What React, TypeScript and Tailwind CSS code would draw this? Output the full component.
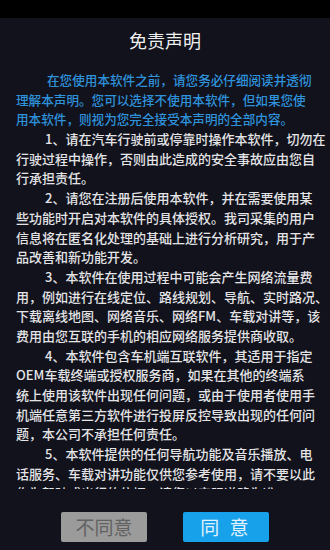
const intro = [
  "在您使用本软件之前，请您务必仔细阅读并透彻",
  "理解本声明。您可以选择不使用本软件，但如果您使",
  "用本软件，则视为您完全接受本声明的全部内容。",
];

const clauses = [
  [
    "1、请在汽车行驶前或停靠时操作本软件，切勿在",
    "行驶过程中操作，否则由此造成的安全事故应由您自",
    "行承担责任。",
  ],
  [
    "2、请您在注册后使用本软件，并在需要使用某",
    "些功能时开启对本软件的具体授权。我司采集的用户",
    "信息将在匿名化处理的基础上进行分析研究，用于产",
    "品改善和新功能开发。",
  ],
  [
    "3、本软件在使用过程中可能会产生网络流量费",
    "用，例如进行在线定位、路线规划、导航、实时路况、",
    "下载离线地图、网络音乐、网络FM、车载对讲等，该",
    "费用由您互联的手机的相应网络服务提供商收取。",
  ],
  [
    "4、本软件包含车机端互联软件，其适用于指定",
    "OEM车载终端或授权服务商，如果在其他的终端系",
    "统上使用该软件出现任何问题，或由于使用者使用手",
    "机端任意第三方软件进行投屏反控导致出现的任何问",
    "题，本公司不承担任何责任。",
  ],
  [
    "5、本软件提供的任何导航功能及音乐播放、电",
    "话服务、车载对讲功能仅供您参考使用，请不要以此",
    "作为驾驶或出行的依据，请您以实际道路为准。",
  ],
];

function Paragraph({ lines, blue }: { lines: string[]; blue?: boolean }) {
  return (
    <p className={blue ? "text-[#2f93dc] text-[12.6px]" : "text-[#e4e4e6] text-[13px]"}>
      {lines.map((line, i) => (
        <span
          key={i}
          className={`block h-[19.7px] whitespace-nowrap leading-[19.7px] ${i === 0 ? (blue ? "pl-[31px]" : "pl-[29px]") : ""}`}
        >
          {line}
        </span>
      ))}
    </p>
  );
}

export default function App() {
  return (
    <div
      className="w-[330px] h-[550px] flex flex-col bg-black overflow-hidden"
      style={{ fontFamily: '"Noto Sans CJK SC", "Noto Sans", sans-serif' }}
    >
      {/* status bar area */}
      <div className="h-[18px] shrink-0 bg-black" />

      <div className="flex-1 flex flex-col bg-[#11121c]">
        <h1 className="pt-[10px] text-center text-[18px] leading-[24px] text-[#f0f0f0]">
          免责声明
        </h1>

        {/* scrolling body */}
        <div className="mt-[18px] h-[419px] shrink-0 overflow-hidden pl-4 pr-[2px] font-medium">
          <Paragraph lines={intro} blue />
          {clauses.map((c, i) => (
            <Paragraph key={i} lines={c} />
          ))}
        </div>

        {/* actions */}
        <div className="mt-[23px] flex justify-center gap-[36px]">
          <button className="w-[86px] h-[30px] rounded-[2px] bg-[#9b9b9b] text-[19px] leading-[30px] text-[#626262]">
            不同意
          </button>
          <button className="w-[86px] h-[30px] rounded-[2px] bg-[#16a1ea] text-[19px] leading-[30px] text-[#e3f2fc] tracking-[3px] whitespace-pre">
            同 意
          </button>
        </div>
      </div>
    </div>
  );
}
